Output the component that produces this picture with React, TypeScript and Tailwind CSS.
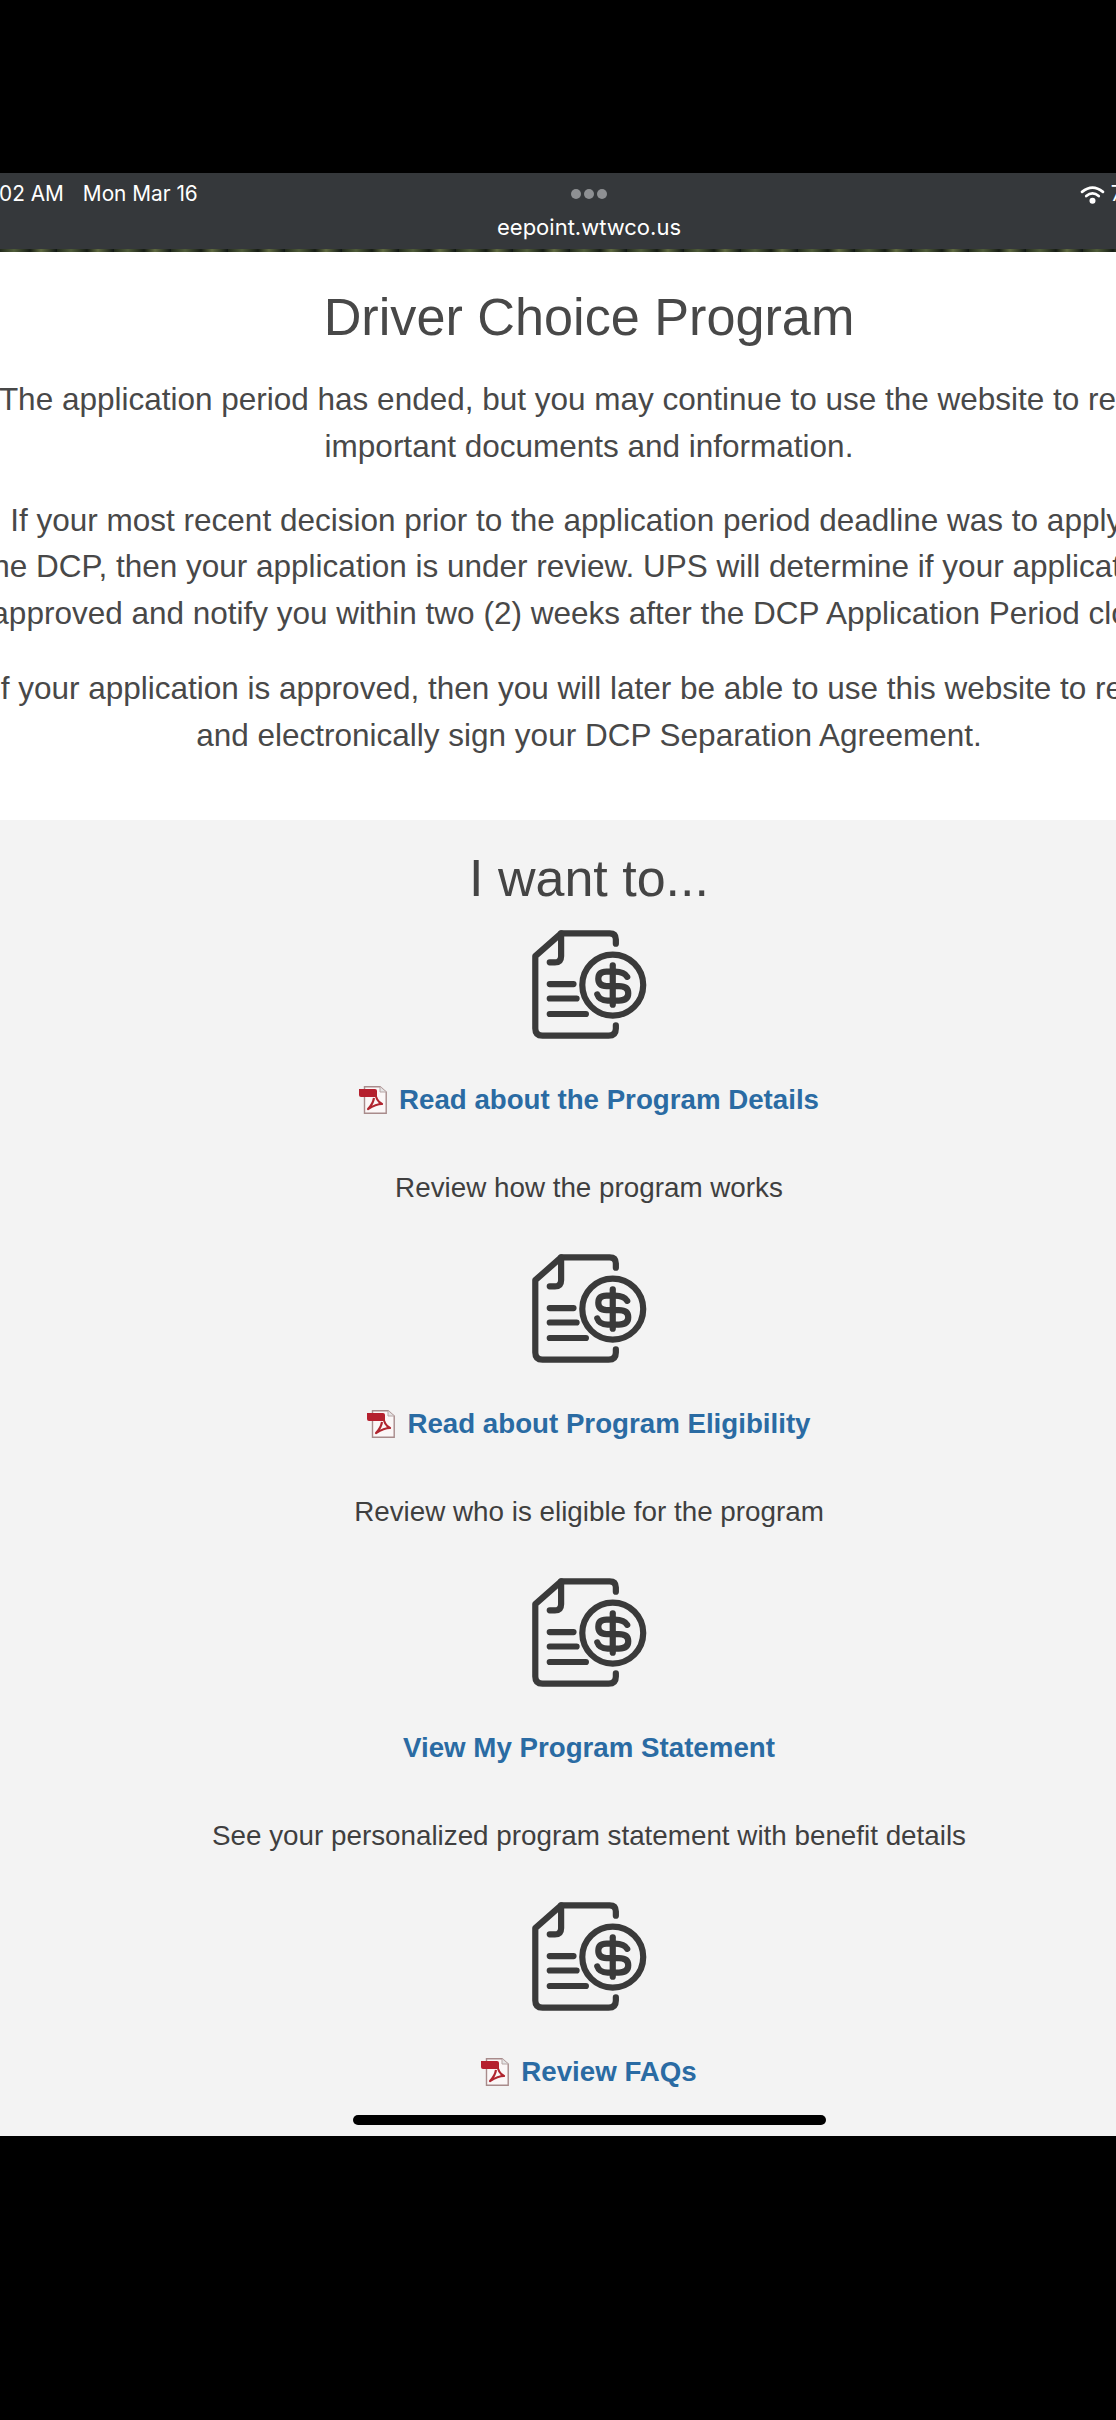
const font = "font-['Liberation_Sans',Arial,sans-serif]";

function MoneyDoc() {
  return (
    <svg width="126" height="116" viewBox="18 10 122 112" fill="none" stroke="#3a3a3a" strokeWidth="6" strokeLinecap="round" strokeLinejoin="round" className="mx-auto block">
      <path d="M105 28 V24 Q105 18 99 18 H52 L27 40 V110 Q27 117 34 117 H98 Q105 117 105 110 V107" />
      <path d="M52 18 V40 Q52 46 46 46 H41" />
      <path d="M41 67 H64 M41 81 H67 M41 96 H76" />
      <circle cx="102" cy="68" r="29.5" />
      <path d="M116 60 Q113 55 104 55 H96 Q88 55 88 62 Q88 69 96 69 H108 Q117 69 117 76 Q117 83 108 83 H97 Q89 83 87 77" />
      <path d="M102 49 V87" />
    </svg>
  );
}

function PdfIcon() {
  return (
    <svg width="28" height="28" viewBox="0 0 28 28" className="shrink-0">
      <path d="M5.5 0.8 H21 L27.2 6 V27.2 H5.5 Z" fill="#fbf7f7" stroke="#a88b8b" strokeWidth="1.4" />
      <path d="M21 0.8 V6 H27.2" fill="#e5e5e5" stroke="#b7a5a5" strokeWidth="1" />
      <path d="M0 3 H16 Q18 3 18 5 V11 H2 Q0 11 0 9 Z" fill="#b5202e" />
      <path d="M16 6 Q17 15 23 18 Q17 18 9 23 Q14 18 15 12" fill="none" stroke="#b0252f" strokeWidth="2.2" strokeLinejoin="round" />
    </svg>
  );
}

function Item({ title, desc, pdf, last }: { title: string; desc: string; pdf: boolean; last?: boolean }) {
  return (
    <div className="mb-[41px]">
      <MoneyDoc />
      <a className="mt-[39px] flex h-[40px] items-center justify-center gap-[12px] text-[27.7px] leading-[40px] font-bold text-[#2a6ba3]">
        {pdf && <PdfIcon />}
        <span>{title}</span>
      </a>
      {!last && <p className="mt-[48px] h-[40px] text-[27.8px] leading-[40px] text-[#3f3f3f]">{desc}</p>}
    </div>
  );
}

export default function App() {
  return (
    <div className={`relative h-[2420px] w-[1116px] overflow-hidden bg-black ${font}`}>
      <div className="h-[173px]" />
      <div className="h-[76px] overflow-hidden bg-[#35383b] text-white">
        <div className="-ml-[61px] w-[1300px]">
          <div className="grid h-[42px] grid-cols-3 items-center text-[20.8px] font-['Inter',sans-serif] leading-[40px]">
            <div className="flex whitespace-nowrap pl-[43px]">
              <span>7:02 AM</span>
              <span className="ml-[19px]">Mon Mar 16</span>
            </div>
            <div className="flex items-center justify-center gap-[3px]">
              <span className="h-[10px] w-[10px] rounded-full bg-[#8e9093]" />
              <span className="h-[10px] w-[10px] rounded-full bg-[#8e9093]" />
              <span className="h-[10px] w-[10px] rounded-full bg-[#8e9093]" />
            </div>
            <div className="flex items-center whitespace-nowrap pl-[274px]">
              <svg width="25" height="19" viewBox="0 0 24 18" fill="none" stroke="#fff" strokeWidth="2.6" strokeLinecap="round">
                <path d="M2 6.5 Q12 -1.5 22 6.5" />
                <path d="M6 10.5 Q12 5.5 18 10.5" />
                <circle cx="12" cy="15" r="1.6" fill="#fff" stroke="#fff" />
              </svg>
              <span className="ml-[6px]">75%</span>
            </div>
          </div>
          <div className="h-[30px] text-center font-['Inter',sans-serif] text-[22px] leading-[24px]">eepoint.wtwco.us</div>
        </div>
      </div>
      <div className="h-[3px] bg-[repeating-linear-gradient(90deg,#222a1c_0px,#4f5c39_14px,#161c14_30px,#5f6a40_41px,#101614_57px)]" />
      <section className="h-[568px] overflow-hidden bg-white text-[#484848]">
        <div className="-ml-[61px] w-[1300px] whitespace-nowrap pt-[35px] text-center">
          <h1 className="text-[52.2px] leading-[60px] font-normal">Driver Choice Program</h1>
          <p className="mt-[29px] text-[31.5px] leading-[46.5px]">
            The application period has ended, but you may continue to use the website to review
            <br />
            important documents and information.
          </p>
          <p className="mt-[27.5px] text-[31.5px] leading-[46.5px]">
            If your most recent decision prior to the application period deadline was to apply for
            <br />
            the DCP, then your application is under review. UPS will determine if your application is
            <br />
            approved and notify you within two (2) weeks after the DCP Application Period closes.
          </p>
          <p className="mt-[29px] text-[31.5px] leading-[46.5px]">
            If your application is approved, then you will later be able to use this website to review
            <br />
            and electronically sign your DCP Separation Agreement.
          </p>
        </div>
      </section>
      <section className="h-[1316px] overflow-hidden bg-[#f3f3f3] text-center">
        <div className="-ml-[61px] w-[1300px] whitespace-nowrap pt-[28px]">
          <h2 className="mb-[17px] text-[52px] leading-[60px] font-normal text-[#444]">I want to...</h2>
          <Item pdf title="Read about the Program Details" desc="Review how the program works" />
          <Item pdf title="Read about Program Eligibility" desc="Review who is eligible for the program" />
          <Item pdf={false} title="View My Program Statement" desc="See your personalized program statement with benefit details" />
          <Item pdf last title="Review FAQs" desc="" />
        </div>
      </section>
      <div className="absolute top-[2115px] left-[353px] h-[10px] w-[473px] rounded-full bg-black" />
    </div>
  );
}
